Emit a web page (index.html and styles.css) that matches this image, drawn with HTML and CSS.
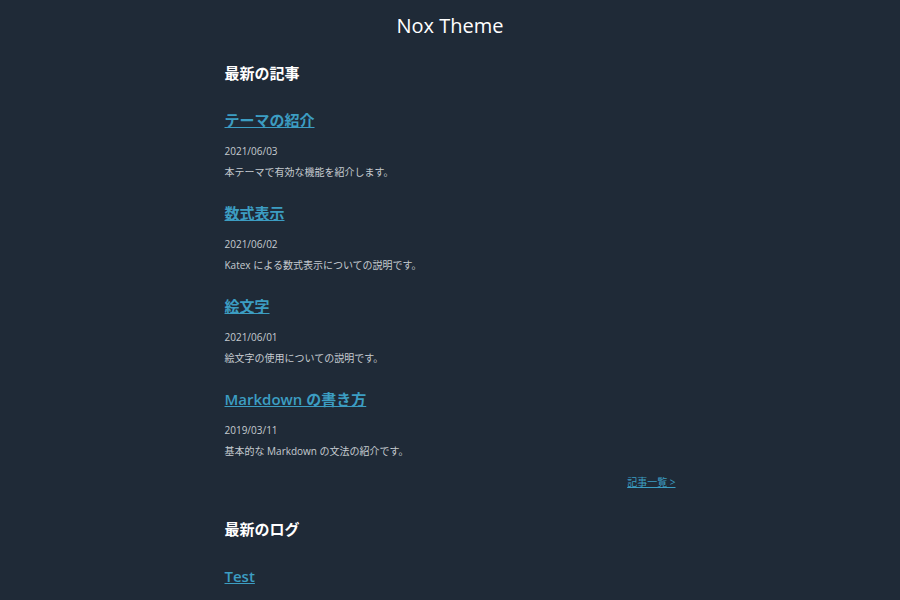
FILE: index.html
```html
<!DOCTYPE html>
<html lang="ja">
<head>
<meta charset="utf-8">
<title>Nox Theme</title>
<link rel="stylesheet" href="styles.css">
</head>
<body>
<header class="site-header">
  <h1 class="site-title">Nox Theme</h1>
</header>
<main class="content">
  <section class="section">
    <h2 class="section-title">最新の記事</h2>
    <div class="post-list">
      <article class="post">
        <a class="post-title" href="#">テーマの紹介</a>
        <div class="post-date">2021/06/03</div>
        <p class="post-desc">本テーマで有効な機能を紹介します。</p>
      </article>
      <article class="post">
        <a class="post-title" href="#">数式表示</a>
        <div class="post-date">2021/06/02</div>
        <p class="post-desc">Katex による数式表示についての説明です。</p>
      </article>
      <article class="post">
        <a class="post-title" href="#">絵文字</a>
        <div class="post-date">2021/06/01</div>
        <p class="post-desc">絵文字の使用についての説明です。</p>
      </article>
      <article class="post">
        <a class="post-title" href="#">Markdown の書き方</a>
        <div class="post-date">2019/03/11</div>
        <p class="post-desc">基本的な Markdown の文法の紹介です。</p>
      </article>
    </div>
    <div class="more"><a class="more-link" href="#">記事一覧 &gt;</a></div>
  </section>
  <section class="section">
    <h2 class="section-title">最新のログ</h2>
    <div class="post-list">
      <article class="post">
        <a class="post-title" href="#">Test</a>
      </article>
    </div>
  </section>
</main>
</body>
</html>
```
FILE: styles.css
```css
html, body {
  margin: 0;
  padding: 0;
  background: #1f2a37;
}
body {
  font-family: "Open Sans", "Noto Sans CJK JP", sans-serif;
  color: #c5cad0;
}
.site-header {
  display: flex;
  justify-content: center;
  padding-top: 1px;
}
.site-title {
  margin: 0;
  font-size: 20px;
  line-height: 49px;
  font-weight: 400;
  color: #ffffff;
}
.content {
  width: 451px;
  margin: 0 auto;
  display: flex;
  flex-direction: column;
}
.section {
  display: flex;
  flex-direction: column;
}
.section-title {
  margin: 12px 0 0;
  font-size: 15px;
  line-height: 22px;
  font-weight: 700;
  color: #ffffff;
}
.post-list {
  display: flex;
  flex-direction: column;
  gap: 21px;
  margin-top: 24px;
}
.post {
  display: flex;
  flex-direction: column;
  align-items: flex-start;
}
.post-title {
  font-size: 15px;
  line-height: 24px;
  font-weight: 600;
  color: #3c9dc2;
  text-decoration: underline;
}
.post-date {
  margin-top: 11px;
  font-size: 10px;
  line-height: 16px;
}
.post-desc {
  margin: 5px 0 0;
  font-size: 10px;
  line-height: 16px;
}
.more {
  display: flex;
  justify-content: flex-end;
  margin-top: 15px;
  margin-bottom: 16px;
}
.more-link {
  font-size: 10px;
  line-height: 16px;
  color: #3c9dc2;
  text-decoration: underline;
}
```
